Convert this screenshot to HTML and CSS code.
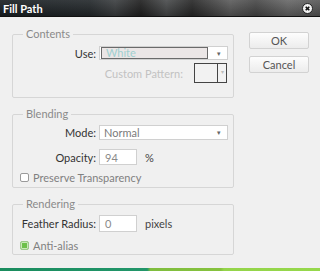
FILE: index.html
```html
<!DOCTYPE html>
<html lang="en">
	<head>
		<meta charset="UTF-8" />
		<title>Fill Path</title>
		<link rel="stylesheet" href="styles.css">
	</head>
	<body>
		<div class="titlebar">
			<span class="title">Fill Path</span>
			<span class="close">
				<svg width="11" height="11" viewBox="0 0 11 11">
					<circle cx="5.5" cy="5.5" r="5" fill="#f2f2f2" stroke="#222" stroke-width="1" />
					<path d="M3.7 3.7 L7.3 7.3 M7.3 3.7 L3.7 7.3" stroke="#111" stroke-width="1.6" />
				</svg>
			</span>
		</div>

		<div class="dialog">
			<div class="groups">
				<fieldset class="group contents">
					<legend>Contents</legend>
					<div class="row use-row">
						<label>Use:</label>
						<div class="select focused">
							<span class="value">White</span>
							<span class="arrow">&#9662;</span>
						</div>
					</div>
					<div class="pattern-row">
						<label class="disabled">Custom Pattern:</label>
						<div class="pattern">
							<span class="swatch"></span>
							<span class="arrow">&#9662;</span>
						</div>
					</div>
				</fieldset>

				<fieldset class="group blending">
					<legend>Blending</legend>
					<div class="row mode-row">
						<label>Mode:</label>
						<div class="select">
							<span class="value">Normal</span>
							<span class="arrow">&#9662;</span>
						</div>
					</div>
					<div class="row opacity-row">
						<label>Opacity:</label>
						<div class="field">94</div>
						<span class="unit">%</span>
					</div>
					<div class="check-row">
						<span class="checkbox"></span>
						<span>Preserve Transparency</span>
					</div>
				</fieldset>

				<fieldset class="group rendering">
					<legend>Rendering</legend>
					<div class="row feather-row">
						<label>Feather Radius:</label>
						<div class="field">0</div>
						<span class="unit">pixels</span>
					</div>
					<div class="check-row">
						<span class="checkbox checked"></span>
						<span>Anti-alias</span>
					</div>
				</fieldset>
			</div>

			<div class="actions">
				<button type="button">OK</button>
				<button type="button">Cancel</button>
			</div>
		</div>

		<div class="accent"></div>
	</body>
</html>
```

FILE: styles.css
```css
body {
	margin: 0;
	width: 320px;
	height: 271px;
	overflow: hidden;
	background-color: #f0f0f0;
	font-family: Lato, "Noto Sans", sans-serif;
	font-size: 11px;
	color: #333;
}
.titlebar {
	height: 17px;
	display: flex;
	align-items: center;
	justify-content: space-between;
	padding: 0 7px 0 3px;
	box-sizing: border-box;
	background:
		linear-gradient(180deg, rgba(255, 255, 255, 0.08) 0%, rgba(0, 0, 0, 0.25) 100%),
		linear-gradient(90deg, #1c2226 0%, #262b2e 28%, #3e4143 36%, #222 44%, #4b4d4e 52%, #2a2a2a 60%, #5e5e5e 72%, #4a4a4a 80%, #6a6a6a 90%, #5a5a5a 100%);
	border-bottom: 1px solid #111;
}
.title {
	color: #fff;
	font-weight: bold;
	font-size: 11px;
}
.close {
	display: flex;
}
.dialog {
	display: flex;
	height: 251px;
	padding: 11px 0 0 12px;
	box-sizing: border-box;
}
.groups {
	width: 222px;
	display: flex;
	flex-direction: column;
	gap: 10px;
}
.group {
	margin: 0;
	padding: 0;
	border: 1px solid #d6d6d6;
	border-radius: 2px;
	min-width: 0;
}
.group legend {
	margin-left: 10px;
	padding: 0 3px;
	line-height: 12px;
	color: #8a8a8a;
}
.contents {
	padding: 6px 0 14px;
}
.blending {
	padding: 5px 0 4px;
}
.rendering {
	padding: 5px 0 3px;
}
.row {
	display: grid;
	grid-template-columns: 83px auto auto;
	justify-content: start;
	column-gap: 3px;
	align-items: center;
	justify-items: start;
}
.row label {
	justify-self: end;
	white-space: nowrap;
}
.disabled {
	color: #c2c2c2;
}
.use-row {
	height: 14px;
	margin-bottom: 3px;
}
.pattern-row {
	height: 20px;
	display: flex;
	align-items: center;
	justify-content: flex-end;
	gap: 11px;
	padding-right: 6px;
}
.mode-row {
	height: 15px;
	margin-bottom: 9px;
}
.opacity-row {
	height: 16px;
	margin-bottom: 6px;
}
.feather-row {
	height: 17px;
	margin-bottom: 7px;
}
.select {
	width: 129px;
	height: 100%;
	box-sizing: border-box;
	display: flex;
	align-items: center;
	justify-content: space-between;
	background: #fff;
	border: 1px solid #d0d0d0;
	padding: 0 6px 0 4px;
}
.select .value {
	color: #7a7a7a;
}
.select.focused {
	padding-left: 1px;
}
.select.focused .value {
	width: 107px;
	height: 12px;
	line-height: 10px;
	padding-left: 4px;
	box-sizing: border-box;
	border: 1px solid #6a6a6a;
	background: #ebe6e6;
	color: #9fd0d0;
}
.arrow {
	font-size: 7px;
	color: #666;
}
.pattern {
	width: 33px;
	height: 20px;
	box-sizing: border-box;
	display: flex;
	border: 1px solid #444;
	background: #f2f2f2;
}
.pattern .swatch {
	width: 22px;
	border-right: 1px solid #444;
}
.pattern .arrow {
	flex: 1;
	text-align: center;
	color: #bbb;
	line-height: 16px;
	font-size: 6px;
}
.field {
	width: 38px;
	height: 100%;
	box-sizing: border-box;
	display: flex;
	align-items: center;
	padding-left: 5px;
	background: #fff;
	border: 1px solid #d0d0d0;
	color: #8a8a8a;
}
.unit {
	margin-left: 5px;
	color: #444;
}
.check-row {
	display: flex;
	align-items: center;
	gap: 4px;
	height: 12px;
	padding-left: 7px;
	color: #808080;
}
.checkbox {
	width: 7px;
	height: 7px;
	border: 1px solid #9a9a9a;
	border-radius: 2px;
	background: #fff;
}
.checkbox.checked {
	border-color: #9cc98a;
	background: #6cc04a;
	box-shadow: inset 0 0 0 1px #c8e8b8;
}
.actions {
	display: flex;
	flex-direction: column;
	gap: 7px;
	margin: 4px 0 0 15px;
}
.actions button {
	width: 60px;
	height: 17px;
	padding: 0;
	font-family: inherit;
	font-size: 11px;
	color: #555;
	background: linear-gradient(180deg, #fdfdfd 0%, #ececec 100%);
	border: 1px solid #d2d2d2;
	border-radius: 2px;
}
.accent {
	height: 3px;
	background: linear-gradient(90deg, #1a8c5e 0%, #22966a 46%, #7fbd3e 47%, #86c23e 69%, #94d44a 70%, #96d84c 100%);
}
```
